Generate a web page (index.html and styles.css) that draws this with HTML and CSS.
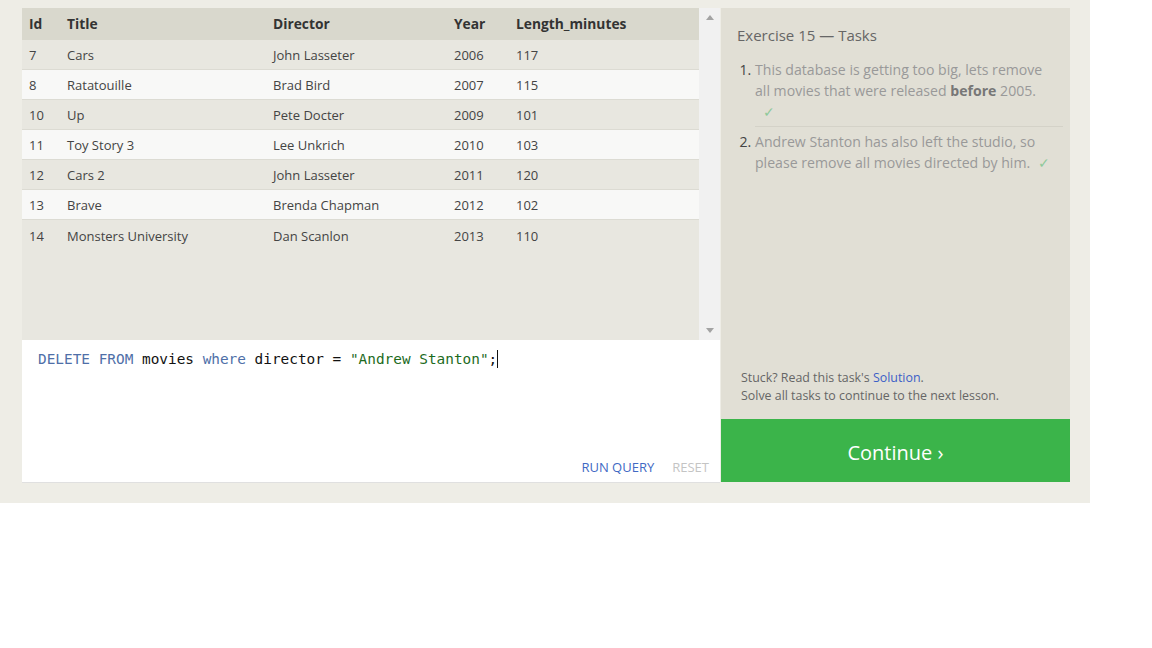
FILE: index.html
```html
<!DOCTYPE html>
<html>
<head>
<meta charset="utf-8">
<link rel="stylesheet" href="styles.css">
</head>
<body>
<div class="page">
  <div class="left">
    <div class="results">
      <div class="table-area">
        <table class="grid">
          <colgroup>
            <col class="c-id"><col class="c-title"><col class="c-dir"><col class="c-year"><col class="c-len">
          </colgroup>
          <thead>
            <tr><th>Id</th><th>Title</th><th>Director</th><th>Year</th><th>Length_minutes</th></tr>
          </thead>
          <tbody>
            <tr class="odd"><td>7</td><td>Cars</td><td>John Lasseter</td><td>2006</td><td>117</td></tr>
            <tr class="even"><td>8</td><td>Ratatouille</td><td>Brad Bird</td><td>2007</td><td>115</td></tr>
            <tr class="odd"><td>10</td><td>Up</td><td>Pete Docter</td><td>2009</td><td>101</td></tr>
            <tr class="even"><td>11</td><td>Toy Story 3</td><td>Lee Unkrich</td><td>2010</td><td>103</td></tr>
            <tr class="odd"><td>12</td><td>Cars 2</td><td>John Lasseter</td><td>2011</td><td>120</td></tr>
            <tr class="even"><td>13</td><td>Brave</td><td>Brenda Chapman</td><td>2012</td><td>102</td></tr>
            <tr class="odd last"><td>14</td><td>Monsters University</td><td>Dan Scanlon</td><td>2013</td><td>110</td></tr>
          </tbody>
        </table>
      </div>
      <div class="scrollbar">
        <span class="arrow up"></span>
        <span class="arrow down"></span>
      </div>
    </div>
    <div class="editor">
      <div class="code"><span class="kw">DELETE FROM</span> movies <span class="kw">where</span> director = <span class="str">"Andrew Stanton"</span>;<span class="cursor"></span></div>
      <div class="actions">
        <span class="run">RUN QUERY</span>
        <span class="reset">RESET</span>
      </div>
    </div>
  </div>
  <div class="right">
    <div class="tasks">
      <div class="tasks-title">Exercise 15 — Tasks</div>
      <ol class="task-list">
        <li class="task">This database is getting too big, lets remove all movies that were released <b>before</b> 2005.<br><span class="check first">✓</span></li>
        <li class="task">Andrew Stanton has also left the studio, so please remove all movies directed by him.&nbsp;<span class="check">✓</span></li>
      </ol>
      <div class="help">
        <div>Stuck? Read this task's <span class="link">Solution</span>.</div>
        <div>Solve all tasks to continue to the next lesson.</div>
      </div>
    </div>
    <div class="continue">Continue ›</div>
  </div>
</div>
</body>
</html>
```

FILE: styles.css
```css
html, body {
  margin: 0;
  padding: 0;
  background: #ffffff;
}
body {
  font-family: "Open Sans", "Noto Sans", sans-serif;
  color: #333;
}
.page {
  width: 1090px;
  height: 503px;
  box-sizing: border-box;
  background: #eeede6;
  padding: 8px 20px 0 22px;
  display: flex;
  align-items: flex-start;
  gap: 1px;
}
.left {
  width: 698px;
  display: flex;
  flex-direction: column;
}
.results {
  height: 332px;
  display: flex;
}
.table-area {
  width: 677px;
  background: #e8e7e0;
}
.grid {
  width: 677px;
  border-collapse: collapse;
  table-layout: fixed;
  font-size: 13px;
}
.c-id { width: 38px; }
.c-title { width: 206px; }
.c-dir { width: 181px; }
.c-year { width: 62px; }
.grid th {
  background: #d9d8cd;
  text-align: left;
  font-weight: bold;
  font-size: 13.8px;
  color: #333;
  height: 31px;
  padding: 0 0 1px 7px;
}
.grid td {
  height: 29px;
  padding: 0 0 0 7px;
  color: #444;
  border-bottom: 1px solid #dcdbd3;
  white-space: nowrap;
}
.grid tr.last td {
  border-bottom: none;
  height: 32px;
}
.grid tr.odd td { background: #e8e7e0; }
.grid tr.even td { background: #f8f8f7; }
.scrollbar {
  width: 21px;
  background: #f1f1f1;
  display: flex;
  flex-direction: column;
  justify-content: space-between;
  align-items: center;
  padding: 7px 0;
  box-sizing: border-box;
}
.arrow {
  width: 0;
  height: 0;
  border-left: 4px solid transparent;
  border-right: 4px solid transparent;
}
.arrow.up { border-bottom: 5px solid #a3a3a3; }
.arrow.down { border-top: 5px solid #a3a3a3; }
.editor {
  height: 142px;
  background: #ffffff;
  border-bottom: 1px solid #e0e0e0;
  display: flex;
  flex-direction: column;
  justify-content: space-between;
}
.code {
  font-family: "DejaVu Sans Mono", "Liberation Mono", monospace;
  font-size: 14.4px;
  line-height: 20px;
  padding: 9px 0 0 16px;
  color: #111;
  white-space: pre;
}
.kw { color: #4f6fa8; }
.str { color: #1d6b1d; }
.cursor {
  display: inline-block;
  width: 1px;
  height: 18px;
  background: #111;
  vertical-align: -4px;
}
.actions {
  display: flex;
  justify-content: flex-end;
  gap: 18px;
  padding: 0 11px 6px 0;
  font-size: 13px;
  line-height: 18px;
}
.run { color: #4169c4; }
.reset { color: #c4c4c4; }
.right {
  width: 349px;
  display: flex;
  flex-direction: column;
}
.tasks {
  height: 411px;
  box-sizing: border-box;
  background: #e1dfd5;
  padding: 17px 7px 14px 16px;
  display: flex;
  flex-direction: column;
}
.tasks-title {
  font-size: 15px;
  color: #666;
  line-height: 20px;
  margin-bottom: 14px;
}
.task-list {
  margin: 0;
  padding: 0 0 0 18px;
  flex: 1;
}
.task {
  font-size: 14.1px;
  line-height: 21px;
  color: #999;
  padding-right: 12px;
}
.task::marker {
  color: #444;
}
.task + .task {
  border-top: 1px solid #d4d2c8;
  margin-top: 4px;
  padding-top: 4px;
}
.task b {
  color: #777;
}
.check {
  color: #8ec99a;
  margin-left: 4px;
}
.check.first {
  margin-left: 8px;
}
.help {
  font-size: 12.4px;
  line-height: 18px;
  color: #666;
  padding-left: 4px;
}
.link { color: #3b5ec7; }
.continue {
  height: 63px;
  box-sizing: border-box;
  padding-top: 3px;
  background: #3bb44a;
  color: #ffffff;
  font-size: 20px;
  display: flex;
  align-items: center;
  justify-content: center;
}
```
